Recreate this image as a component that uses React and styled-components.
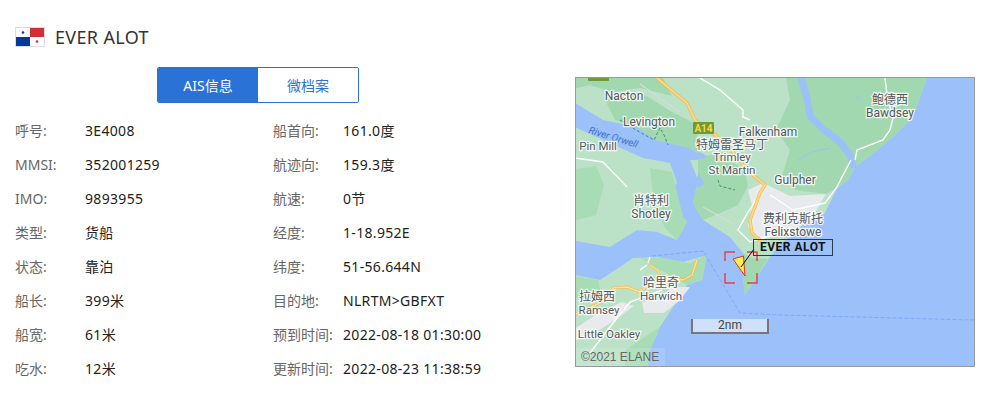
import React from "react";
import styled, { createGlobalStyle } from "styled-components";

const GlobalStyle = createGlobalStyle`
  html, body {
    margin: 0;
    padding: 0;
    background: #fff;
    font-family: "Noto Sans", "Noto Sans CJK SC", sans-serif;
  }
`;

const Page = styled.div`
  width: 991px;
  height: 401px;
  overflow: hidden;
`;

const Header = styled.header`
  display: flex;
  align-items: center;
  gap: 10px;
  height: 20px;
  padding: 27px 0 0 15px;
`;

const ShipName = styled.h1`
  margin: 0;
  font-size: 18px;
  font-weight: 400;
  letter-spacing: 0.35px;
  color: #333;
`;

const Body = styled.div`
  display: flex;
  margin-top: 20px;
`;

const InfoPanel = styled.section`
  width: 516px;
  margin-right: 59px;
`;

const Tabs = styled.div`
  display: flex;
  width: 202px;
  height: 36px;
  margin: 0 auto 10px;
  box-sizing: border-box;
  border: 1px solid #2a72d5;
  border-radius: 2px;
  overflow: hidden;
`;

const Tab = styled.div`
  flex: 1;
  display: flex;
  align-items: center;
  justify-content: center;
  font-size: 14px;
  color: ${(p) => (p.$active ? "#fff" : "#2a72d5")};
  background: ${(p) => (p.$active ? "#2a72d5" : "#fff")};
`;

const InfoGrid = styled.div`
  display: grid;
  grid-template-columns: 258px 258px;
  grid-auto-rows: 34px;
  padding-left: 15px;
`;

const InfoRow = styled.div`
  display: flex;
  align-items: center;
  font-size: 14px;
`;

const Label = styled.span`
  width: 70px;
  flex: none;
  color: #666;
`;

const Value = styled.span`
  color: #222;
  letter-spacing: 0.32px;
  white-space: nowrap;
`;

const MapFrame = styled.div`
  position: relative;
  width: 400px;
  height: 290px;
  margin-top: 10px;
  box-sizing: border-box;
  border: 1px solid #999;
  overflow: hidden;
  font-family: Roboto, "Noto Sans CJK SC", sans-serif;
`;

const MapSvg = styled.svg`
  display: block;
`;

const PlaceName = styled.text`
  font-size: ${(p) => p.$size || 12}px;
  fill: #55595e;
  stroke: #fff;
  stroke-width: 2.5px;
  stroke-opacity: 0.8;
  paint-order: stroke;
  text-anchor: middle;
`;

const RiverName = styled.text`
  font-size: 10px;
  font-style: italic;
  fill: #3b71c9;
`;

const ShipLabel = styled.div`
  position: absolute;
  left: 177px;
  top: 161px;
  width: 80px;
  height: 17px;
  box-sizing: border-box;
  border: 1px solid #2c3a4d;
  font-size: 12px;
  font-weight: 700;
  line-height: 15px;
  text-align: center;
  letter-spacing: 0.5px;
  color: #111;
`;

const ScaleBar = styled.div`
  position: absolute;
  left: 115px;
  top: 241px;
  width: 78px;
  height: 15px;
  box-sizing: border-box;
  border: 2px solid #777;
  border-top: 0;
  background: #cfe0fb;
  font-size: 12px;
  line-height: 13px;
  text-align: center;
  color: #444;
`;

const Copyright = styled.div`
  position: absolute;
  left: 0;
  bottom: 0;
  padding: 1px 6px 0 5px;
  height: 18px;
  box-sizing: border-box;
  background: rgba(255, 255, 255, 0.12);
  font-family: "Liberation Sans", sans-serif;
  font-size: 12px;
  line-height: 17px;
  color: #666;
`;

const leftRows = [
  ["呼号:", "3E4008"],
  ["MMSI:", "352001259"],
  ["IMO:", "9893955"],
  ["类型:", "货船"],
  ["状态:", "靠泊"],
  ["船长:", "399米"],
  ["船宽:", "61米"],
  ["吃水:", "12米"],
];

const rightRows = [
  ["船首向:", "161.0度"],
  ["航迹向:", "159.3度"],
  ["航速:", "0节"],
  ["经度:", "1-18.952E"],
  ["纬度:", "51-56.644N"],
  ["目的地:", "NLRTM>GBFXT"],
  ["预到时间:", "2022-08-18 01:30:00"],
  ["更新时间:", "2022-08-23 11:38:59"],
];

// grid fills row by row, so pair up both columns
const rows = leftRows.flatMap((row, i) => [row, rightRows[i]]);

const places = [
  ["Nacton", 624, 100],
  ["Levington", 649, 126],
  ["Pin Mill", 598, 150, 11.5],
  ["Falkenham", 768, 136],
  ["特姆雷圣马丁", 732, 149, 12],
  ["Trimley", 732, 161, 11.5],
  ["St Martin", 732, 174, 11.5],
  ["Gulpher", 795, 184],
  ["鲍德西", 890, 104, 12],
  ["Bawdsey", 890, 117],
  ["肖特利", 651, 205, 12],
  ["Shotley", 651, 218],
  ["费利克斯托", 793, 223, 12],
  ["Felixstowe", 793, 236],
  ["哈里奇", 661, 287, 12],
  ["Harwich", 661, 300, 11.5],
  ["拉姆西", 597, 301, 12],
  ["Ramsey", 599, 314, 11.5],
  ["Little Oakley", 609, 338, 11.5],
];

const yellowRoad = "M657 78 687 103 695 120 713 133 730 148 747 170 765 185 760 193 750 220 752 233 760 240";
const harwichRoad = "M576 314 600 303 613 288 627 287 640 292 651 283 660 277 658 270 650 265M660 277 683 280 692 275 697 260";

const Flag = () => (
  <svg width="30" height="20" viewBox="0 0 30 20">
    <rect width="30" height="20" fill="#fff" />
    <rect x="15" y="1" width="14" height="9" fill="#cf3033" />
    <rect x="1" y="10" width="14" height="9" fill="#04389b" />
    <circle cx="8" cy="5.5" r="1.3" fill="#04389b" />
    <circle cx="22" cy="14.5" r="1.3" fill="#cf3033" />
    <rect x="0.5" y="0.5" width="29" height="19" fill="none" stroke="#ddd" />
  </svg>
);

const ShipMap = () => (
  <MapFrame>
    <MapSvg width="398" height="288" viewBox="576 78 398 288">
      <defs>
        <filter id="soften" x="0" y="0" width="100%" height="100%">
          <feGaussianBlur stdDeviation="0.7" />
        </filter>
      </defs>
      <rect x="576" y="78" width="398" height="288" fill="#9cc0fa" />

      <g filter="url(#soften)">
        {/* land */}
        <path
          fill="#bbe2c7"
          d="M570 72H929L918 103 912 118 895 135 875 152 855 167 848 180 837 188 825 213 803 225 780 245 770 257 745 295 743 277 743 253 730 237 703 220 693 203 698 180 690 160 700 155 690 148 657 140 637 127 603 120 570 100Z"
        />
        <path
          fill="#bbe2c7"
          d="M570 125 603 140 643 158 670 163 677 183 672 190 683 217 687 222 677 240 657 232 637 230 610 247 570 240Z"
        />
        <path
          fill="#bbe2c7"
          d="M570 274 600 280 620 267 633 258 657 257 683 262 697 258 707 255 702 280 687 285 673 307 660 327 650 350 647 372H570Z"
        />

        {/* darker fields */}
        <path
          fill="#a1d8af"
          d="M785 72H929L918 103 912 118 895 135 875 152 855 167 848 180 837 188 826 194 795 190 782 176 790 150 776 130 790 100Z"
        />
        <path fill="#a1d8af" d="M604 98 640 92 672 112 696 124 700 155 690 148 657 140 637 127 615 120Z" />
        <path fill="#a1d8af" d="M698 158 722 152 745 172 748 186 738 205 718 214 703 220 693 203 698 180Z" />
        <path fill="#a1d8af" d="M570 72H660L672 96 640 88 612 92 590 85 570 90Z" />
        <path fill="#a8dcb5" d="M570 170 596 166 604 185 596 215 570 222Z" />
        <path fill="#a8dcb5" d="M650 168 672 172 676 188 683 217 687 222 677 240 665 228 654 205Z" />
        <path fill="#a1d8af" d="M745 295 743 277 743 253 752 258 768 259 745 295Z" />
        <path fill="#a8dcb5" d="M640 258 662 258 690 263 707 255 702 280 687 285 670 275Z" />
        <path fill="#a8dcb5" d="M570 275 598 280 602 300 570 298Z" />
        <path fill="#a8dcb5" d="M625 350 660 327 650 350 647 372H625Z" />

        {/* built up areas */}
        <path fill="#e8eaed" d="M748 190 763 183 790 196 826 194 812 218 790 232 760 240 748 226 752 205Z" />
        <path fill="#e8eaed" d="M642 302 663 298 670 287 690 287 680 300 664 313 644 313Z" />
        <path fill="#e8eaed" d="M576 328 600 312 622 302 634 306 612 322 590 336 576 340Z" />

        {/* rivers and creeks */}
        <path fill="none" stroke="#9cc0fa" strokeWidth="7" d="M800 74 807 98 810 116 822 128 840 142 850 155 854 168" />
        <path fill="none" stroke="#9cc0fa" strokeWidth="1" d="M798 160 812 152 830 148M855 100 860 95" />
        <path fill="#9cc0fa" d="M690 160 700 152 708 157 696 160ZM694 185 699 173 704 184 698 188Z" />

        {/* minor roads */}
        <path fill="none" stroke="#d5dbd7" strokeWidth="1.2" d="M703 207 735 225M640 84 680 112" />
        <g fill="none" stroke="#fff" strokeWidth="1.4">
          <path d="M700 78 720 90 743 110 743 117 750 120" />
          <path d="M885 78 887 95 893 118 890 130 883 140 857 150 855 160M851 160 842 177 837 187 825 203 793 210 770 195" />
          <path d="M575 158 603 162 627 187" />
          <path d="M648 263 650 257M647 265 640 270M590 353 613 323 630 302 662 290" />
          <path d="M760 194 748 212 738 230 750 242 762 238 790 232" />
        </g>

        {/* main roads */}
        <g fill="none" strokeLinejoin="round" strokeLinecap="round">
          <path stroke="#f2b84a" strokeWidth="3.2" d={yellowRoad} />
          <path stroke="#fdd884" strokeWidth="2" d={yellowRoad} />
          <path stroke="#f2b84a" strokeWidth="2.6" d={harwichRoad} />
          <path stroke="#fde293" strokeWidth="1.4" d={harwichRoad} />
        </g>
      </g>

      {/* footpath */}
      <path fill="none" stroke="#3a9a62" strokeDasharray="3 2" strokeWidth="1" d="M620 120 636 130 654 140 660 128 664 135 668 145M718 180 720 186 735 190" />

      {/* shipping lanes */}
      <path fill="none" stroke="#7baaf7" strokeDasharray="4 2" strokeWidth="1" d="M652 256 703 251 740 313 780 315 974 320" />

      {/* road shields */}
      <rect x="588" y="73" width="21" height="8" rx="1" fill="#6f9a3c" />
      <rect x="693" y="122" width="21" height="12" rx="1" fill="#6f9a3c" />
      <text x="703.5" y="132" textAnchor="middle" fontSize="10" fontWeight="700" fill="#fdd835">A14</text>

      <RiverName x="588" y="133" transform="rotate(17 588 133)">River Orwell</RiverName>

      {places.map(([name, x, y, size]) => (
        <PlaceName key={name} x={x} y={y} $size={size}>{name}</PlaceName>
      ))}

      {/* ship marker */}
      <path
        fill="none"
        stroke="#e8404c"
        strokeWidth="1.5"
        d="M725 261V252H735M747 252H757V261M757 273V283H747M735 283H725V273"
      />
      <path d="M733 259 743.5 256 745 276Z" fill="#fff04a" stroke="#e52b3a" strokeWidth="1" />
      <path d="M741 267 754 249" stroke="#111" strokeWidth="1" />
    </MapSvg>
    <ShipLabel>EVER ALOT</ShipLabel>
    <ScaleBar>2nm</ScaleBar>
    <Copyright>©2021 ELANE</Copyright>
  </MapFrame>
);

const App = () => (
  <Page>
    <GlobalStyle />
    <Header>
      <Flag />
      <ShipName>EVER ALOT</ShipName>
    </Header>
    <Body>
      <InfoPanel>
        <Tabs>
          <Tab $active>AIS信息</Tab>
          <Tab>微档案</Tab>
        </Tabs>
        <InfoGrid>
          {rows.map(([label, value]) => (
            <InfoRow key={label}>
              <Label>{label}</Label>
              <Value>{value}</Value>
            </InfoRow>
          ))}
        </InfoGrid>
      </InfoPanel>
      <ShipMap />
    </Body>
  </Page>
);

export default App;
